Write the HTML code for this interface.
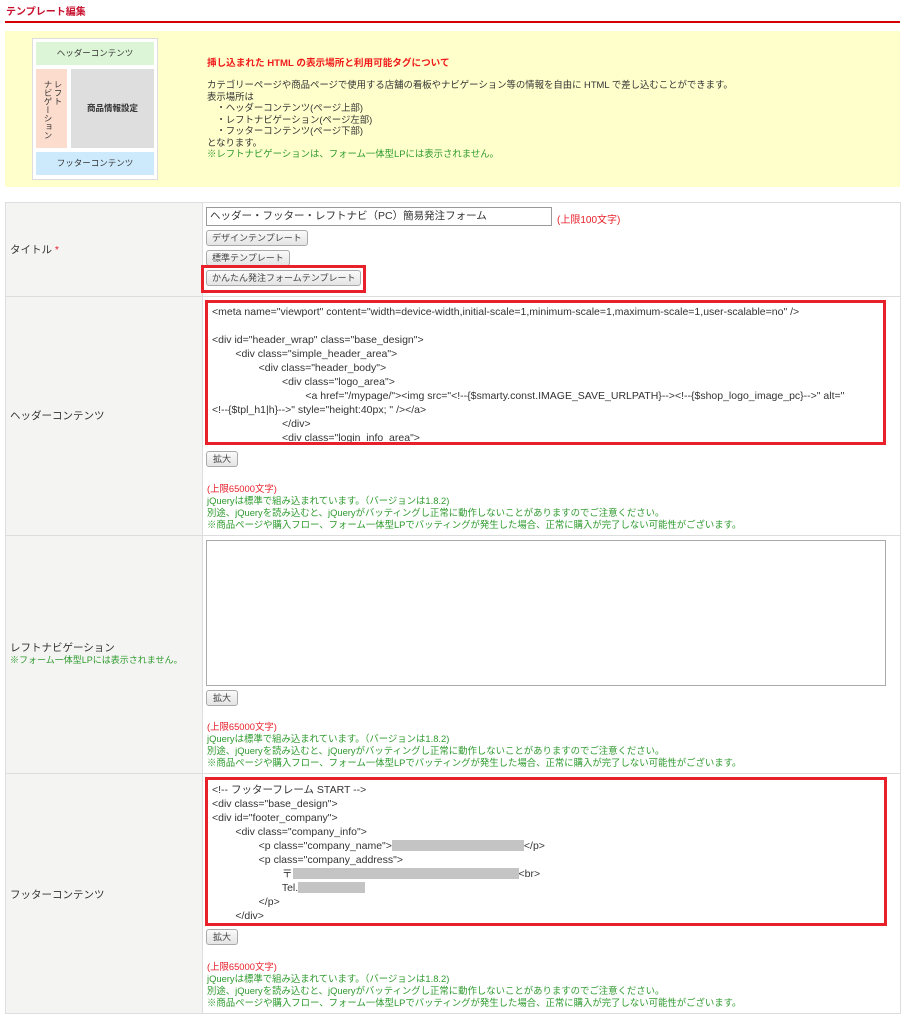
<!DOCTYPE html>
<html><head><meta charset="utf-8"><style>
*{margin:0;padding:0;box-sizing:border-box}
body{width:908px;height:1024px;background:#fff;font-family:"Liberation Sans","Noto Sans CJK JP",sans-serif;font-size:10px;color:#333;position:relative;overflow:hidden}
.a{position:absolute;white-space:nowrap}
.red{color:#e8202a}.grn{color:#2e9a2e}
.btn{position:absolute;height:16px;border:1px solid #aaa;border-radius:3px;background:linear-gradient(#fafafa,#e4e4e4);font-size:9px;line-height:14px;padding:0 5px;color:#444;white-space:nowrap}
.ta{position:absolute;background:#fff;overflow:hidden}
.code{position:absolute;left:4px;font-size:10.5px;line-height:14px;color:#333;white-space:pre}
.bar{display:inline-block;background:#c4c4c4;height:11px;vertical-align:-2px}
.note{position:absolute;left:207px;font-size:9.4px;line-height:12px;white-space:nowrap}
</style></head><body>
<div class="a" style="left:6px;top:3px;font-size:10px;font-weight:bold;color:#c8102e">テンプレート編集</div>
<div class="a" style="left:5px;top:21px;width:895px;height:2px;background:#d40000"></div>
<div class="a" style="left:5px;top:31px;width:895px;height:156px;background:#ffffcc"></div>
<div class="a" style="left:32px;top:38px;width:126px;height:142px;background:#fff;border:1px solid #ddd"></div>
<div class="a" style="left:36px;top:42px;width:118px;height:23px;background:#dcf5d6;text-align:center;line-height:23px;font-size:8.5px">ヘッダーコンテンツ</div>
<div class="a" style="left:36px;top:69px;width:31px;height:79px;background:#fcdccc"></div>
<div class="a" style="left:43px;top:80px;font-size:8.5px;line-height:10px;writing-mode:vertical-rl;height:60px">レフト<br>ナビゲーション</div>
<div class="a" style="left:71px;top:69px;width:83px;height:79px;background:#dedede;text-align:center;line-height:79px;font-size:8.5px;font-weight:bold">商品情報設定</div>
<div class="a" style="left:36px;top:152px;width:118px;height:23px;background:#cdeafc;text-align:center;line-height:23px;font-size:8.5px">フッターコンテンツ</div>
<div class="a" style="left:207px;top:55px;font-size:9.6px;font-weight:bold;color:#f01a1a">挿し込まれた HTML の表示場所と利用可能タグについて</div>
<div class="a" style="left:207px;top:79px;font-size:9.4px;line-height:11.5px">カテゴリーページや商品ページで使用する店舗の看板やナビゲーション等の情報を自由に HTML で差し込むことができます。<br>表示場所は<br>　・ヘッダーコンテンツ(ページ上部)<br>　・レフトナビゲーション(ページ左部)<br>　・フッターコンテンツ(ページ下部)<br>となります。<br><span class="grn">※レフトナビゲーションは、フォーム一体型LPには表示されません。</span></div>

<div class="a" style="left:5px;top:202px;width:896px;height:812px;border:1px solid #ddd;background:#fff"></div>
<div class="a" style="left:6px;top:203px;width:196px;height:810px;background:#f4f5f3"></div>
<div class="a" style="left:202px;top:203px;width:1px;height:810px;background:#ddd"></div>
<div class="a" style="left:6px;top:296px;width:894px;height:1px;background:#ddd"></div>
<div class="a" style="left:6px;top:535px;width:894px;height:1px;background:#ddd"></div>
<div class="a" style="left:6px;top:773px;width:894px;height:1px;background:#ddd"></div>

<div class="a" style="left:10px;top:242px;font-size:10.5px">タイトル <span class="red">*</span></div>
<div class="a" style="left:206px;top:207px;width:346px;height:19px;border:1px solid #999;background:#fff;font-size:10.5px;line-height:17px;padding-left:3px">ヘッダー・フッター・レフトナビ（PC）簡易発注フォーム</div>
<div class="a red" style="left:557px;top:211px;font-size:10px">(上限100文字)</div>
<div class="btn" style="left:206px;top:230px">デザインテンプレート</div>
<div class="btn" style="left:206px;top:250px">標準テンプレート</div>
<div class="a" style="left:201px;top:265px;width:165px;height:28px;border:3px solid #e8202a"></div>
<div class="btn" style="left:206px;top:270px">かんたん発注フォームテンプレート</div>

<div class="a" style="left:10px;top:408px;font-size:10.5px">ヘッダーコンテンツ</div>
<div class="ta" style="left:205px;top:300px;width:681px;height:145px;border:3px solid #e8202a">
<div class="code" style="top:2px">&lt;meta name="viewport" content="width=device-width,initial-scale=1,minimum-scale=1,maximum-scale=1,user-scalable=no" /&gt;

&lt;div id="header_wrap" class="base_design"&gt;
        &lt;div class="simple_header_area"&gt;
                &lt;div class="header_body"&gt;
                        &lt;div class="logo_area"&gt;
                                &lt;a href="/mypage/"&gt;&lt;img src="&lt;!--{$smarty.const.IMAGE_SAVE_URLPATH}--&gt;&lt;!--{$shop_logo_image_pc}--&gt;" alt="
&lt;!--{$tpl_h1|h}--&gt;" style="height:40px; " /&gt;&lt;/a&gt;
                        &lt;/div&gt;
                        &lt;div class="login_info_area"&gt;</div></div>
<div class="btn" style="left:206px;top:451px;padding:0 6px">拡大</div>
<div class="note" style="top:483px"><span class="red">(上限65000文字)</span><br><span class="grn">jQueryは標準で組み込まれています。（バージョンは1.8.2)<br>別途、jQueryを読み込むと、jQueryがバッティングし正常に動作しないことがありますのでご注意ください。<br>※商品ページや購入フロー、フォーム一体型LPでバッティングが発生した場合、正常に購入が完了しない可能性がございます。</span></div>

<div class="a" style="left:10px;top:642px;font-size:10.5px;line-height:12px">レフトナビゲーション<br><span class="grn" style="font-size:9px">※フォーム一体型LPには表示されません。</span></div>
<div class="ta" style="left:206px;top:540px;width:680px;height:146px;border:1px solid #aaa"></div>
<div class="btn" style="left:206px;top:690px;padding:0 6px">拡大</div>
<div class="note" style="top:721px"><span class="red">(上限65000文字)</span><br><span class="grn">jQueryは標準で組み込まれています。（バージョンは1.8.2)<br>別途、jQueryを読み込むと、jQueryがバッティングし正常に動作しないことがありますのでご注意ください。<br>※商品ページや購入フロー、フォーム一体型LPでバッティングが発生した場合、正常に購入が完了しない可能性がございます。</span></div>

<div class="a" style="left:10px;top:887px;font-size:10.5px">フッターコンテンツ</div>
<div class="ta" style="left:205px;top:777px;width:682px;height:149px;border:3px solid #e8202a">
<div class="code" style="top:3px">&lt;!-- フッターフレーム START --&gt;
&lt;div class="base_design"&gt;
&lt;div id="footer_company"&gt;
        &lt;div class="company_info"&gt;
                &lt;p class="company_name"&gt;<span class="bar" style="width:132px"></span>&lt;/p&gt;
                &lt;p class="company_address"&gt;
                        〒<span class="bar" style="width:226px"></span>&lt;br&gt;
                        Tel.<span class="bar" style="width:67px"></span>
                &lt;/p&gt;
        &lt;/div&gt;</div></div>
<div class="btn" style="left:206px;top:929px;padding:0 6px">拡大</div>
<div class="note" style="top:961px"><span class="red">(上限65000文字)</span><br><span class="grn">jQueryは標準で組み込まれています。（バージョンは1.8.2)<br>別途、jQueryを読み込むと、jQueryがバッティングし正常に動作しないことがありますのでご注意ください。<br>※商品ページや購入フロー、フォーム一体型LPでバッティングが発生した場合、正常に購入が完了しない可能性がございます。</span></div>
</body></html>
